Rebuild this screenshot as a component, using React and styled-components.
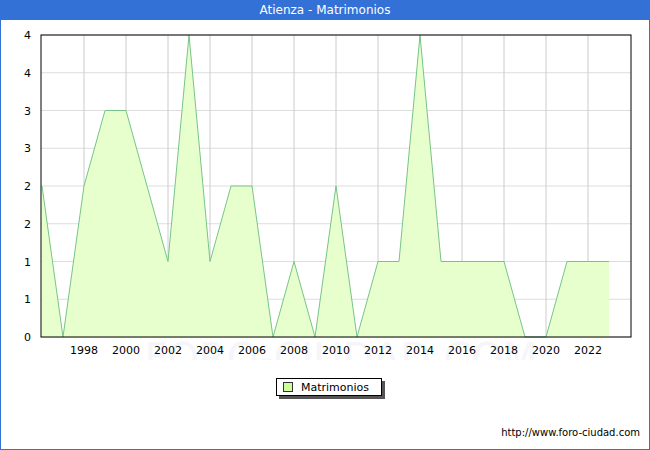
import styled, { createGlobalStyle } from "styled-components";

const Global = createGlobalStyle`
  body { margin: 0; font-family: "DejaVu Sans", Verdana, sans-serif; }
`;

const Frame = styled.div`
  width: 650px;
  height: 450px;
  box-sizing: border-box;
  border: 1px solid #3371d6;
  border-top: none;
  display: flex;
  flex-direction: column;
  background: #fff;
`;

const TitleBar = styled.div`
  height: 20px;
  background: #3371d6;
  color: #fff;
  font-size: 12px;
  line-height: 21px;
  text-align: center;
  margin: 0 -1px;
`;

const LegendRow = styled.div`
  display: flex;
  padding: 18px 0 0 275px;
  height: 40px;
`;

const LegendBox = styled.div`
  display: flex;
  align-items: center;
  gap: 8px;
  height: 16px;
  padding: 0 12px 0 6px;
  border: 1px solid #000;
  box-shadow: 3px 3px 0 #555;
  font-size: 11px;
`;

const Swatch = styled.span`
  width: 8px;
  height: 8px;
  border: 1px solid #333;
  background: #ccff99;
`;

const Footer = styled.div`
  text-align: right;
  padding-right: 9px;
  font-size: 10px;
  margin-top: 9px;
`;

const data = [2,0,2,3,3,2,1,4,1,2,2,0,1,0,2,0,1,1,4,1,1,1,1,0,0,1,1,1];
const X0 = 41, DX = 21, Y0 = 317, K = 75.5;
const px = (i) => X0 + i * DX;
const py = (v) => Y0 - v * K;
const yLabels = ["0","1","1","2","2","3","3","4","4"];

function Chart() {
  const pts = data.map((v, i) => `${px(i)},${py(v)}`).join(" ");
  const area = `${px(0)},${Y0} ${pts} ${px(data.length - 1)},${Y0}`;
  return (
    <svg width="648" height="340" style={{ display: "block" }}>
      <text x="340" y="352" textAnchor="middle" fontSize="40" fill="#f5f5fa" fontFamily="DejaVu Sans">FORO-CIUDAD.COM</text>
      {yLabels.map((l, i) => {
        const y = Y0 - i * 37.75;
        return (
          <g key={i}>
            <line x1="40" x2="630" y1={y} y2={y} stroke="#ddd" />
            <text x="30" y={y + 4} textAnchor="end" fontSize="11">{l}</text>
          </g>
        );
      })}
      {Array.from({ length: 13 }, (_, k) => {
        const x = px(2 + k * 2);
        return (
          <g key={k}>
            <line x1={x} x2={x} y1="15" y2={Y0} stroke="#ccc" />
            {k < 13 && <text x={x} y={Y0 + 17} textAnchor="middle" fontSize="11">{1998 + k * 2}</text>}
          </g>
        );
      })}
      <polygon points={area} fill="#e6ffcc" />
      <polyline points={pts} fill="none" stroke="#77c488" strokeWidth="1" />
      <rect x="40" y="15" width="590" height={Y0 - 15} fill="none" stroke="#000" />
    </svg>
  );
}

export default function App() {
  return (
    <>
      <Global />
      <Frame>
        <TitleBar>Atienza - Matrimonios</TitleBar>
        <Chart />
        <LegendRow>
          <LegendBox><Swatch />Matrimonios</LegendBox>
        </LegendRow>
        <Footer>http://www.foro-ciudad.com</Footer>
      </Frame>
    </>
  );
}
